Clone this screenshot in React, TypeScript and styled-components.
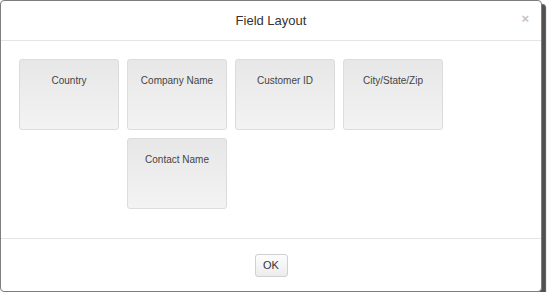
import React from "react";
import styled, { createGlobalStyle } from "styled-components";

const GlobalStyle = createGlobalStyle`
  body {
    margin: 0;
    background: #fff;
    font-family: "Liberation Sans", Arial, sans-serif;
  }
`;

const Dialog = styled.div`
  width: 540px;
  border: 1px solid #7d7d7d;
  border-radius: 4px;
  background: #fff;
  box-shadow: 4px 4px 1px rgba(50, 50, 50, 0.85);
  display: flex;
  flex-direction: column;
`;

const Header = styled.div`
  position: relative;
  height: 39px;
  border-bottom: 1px solid #e5e5e5;
  display: flex;
  align-items: center;
  justify-content: center;
`;

const Title = styled.h4`
  margin: 0;
  font-size: 13px;
  font-weight: normal;
  color: #333;
`;

const Close = styled.span`
  position: absolute;
  right: 12px;
  top: 10px;
  font-size: 13px;
  font-weight: bold;
  color: #c4c4c4;
`;

const Body = styled.div`
  padding: 18px 18px 29px;
  display: grid;
  grid-template-columns: repeat(4, 100px);
  grid-auto-rows: 71px;
  gap: 8px;
`;

const Tile = styled.div<{ $col: number; $row: number }>`
  grid-column: ${(p) => p.$col};
  grid-row: ${(p) => p.$row};
  box-sizing: border-box;
  border: 1px solid #dcdcdc;
  border-radius: 3px;
  background: linear-gradient(#e7e7e7, #f3f3f3);
  text-align: center;
  padding-top: 15px;
  font-size: 10px;
  color: #444;
`;

const Footer = styled.div`
  height: 53px;
  border-top: 1px solid #e5e5e5;
  display: flex;
  align-items: center;
  justify-content: center;
  box-sizing: border-box;
`;

const Button = styled.button`
  width: 33px;
  height: 23px;
  border: 1px solid #d0d0d0;
  border-radius: 3px;
  background: linear-gradient(#fdfdfd, #ececec);
  font-family: "Liberation Sans", Arial, sans-serif;
  font-size: 11px;
  color: #333;
  padding: 0;
`;

const fields = [
  { name: "Country", col: 1, row: 1 },
  { name: "Company Name", col: 2, row: 1 },
  { name: "Customer ID", col: 3, row: 1 },
  { name: "City/State/Zip", col: 4, row: 1 },
  { name: "Contact Name", col: 2, row: 2 },
];

const App: React.FunctionComponent = () => {
  return (
    <>
      <GlobalStyle />
      <Dialog>
        <Header>
          <Title>Field Layout</Title>
          <Close>×</Close>
        </Header>
        <Body>
          {fields.map((f) => (
            <Tile key={f.name} $col={f.col} $row={f.row}>
              {f.name}
            </Tile>
          ))}
        </Body>
        <Footer>
          <Button>OK</Button>
        </Footer>
      </Dialog>
    </>
  );
};
export default App;
